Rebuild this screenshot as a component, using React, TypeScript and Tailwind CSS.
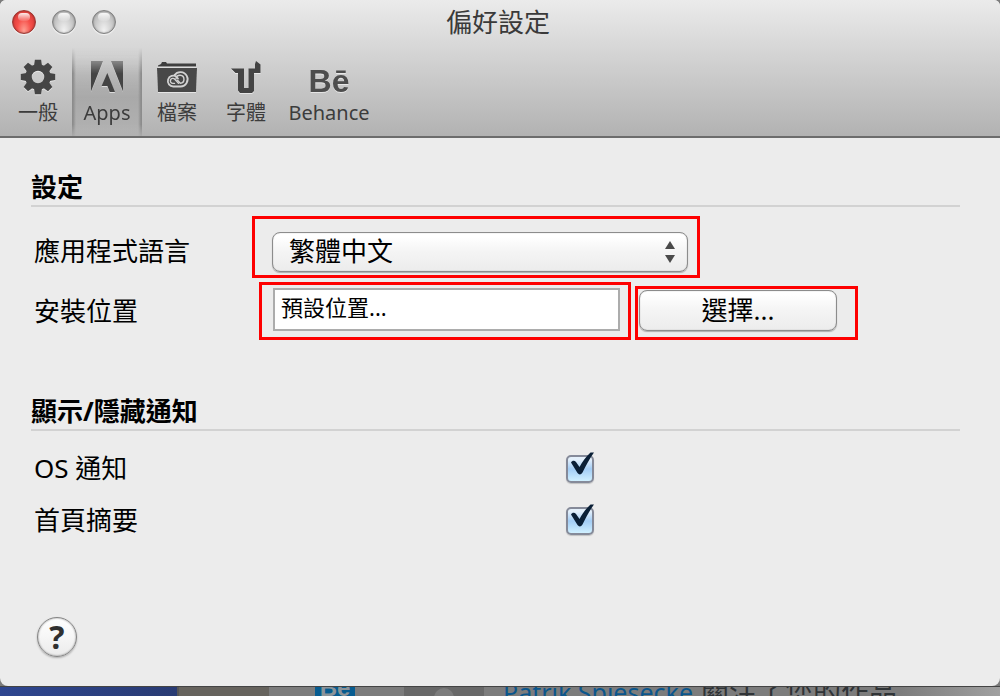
import { useState } from "react";
import type { ReactNode } from "react";

type TabKey = "general" | "apps" | "files" | "fonts" | "behance";

function GearIcon() {
  const teeth = [0, 45, 90, 135, 180, 225, 270, 315];
  return (
    <svg width="36" height="36" viewBox="0 0 36 36" aria-hidden="true">
      {teeth.map((angle) => (
        <path
          key={angle}
          d="M13.8 8 L14.900 0.800 H21.100 L22.200 8 Z"
          fill="#454545"
          transform={`rotate(${angle} 18 18)`}
        />
      ))}
      <circle cx="18" cy="18" r="9.500" fill="none" stroke="#454545" strokeWidth="6.500" />
    </svg>
  );
}

function AdobeIcon() {
  return (
    <svg width="34" height="32" viewBox="0 0 34 32" fill="#444" aria-hidden="true">
      <path d="M1 0 H13 L1 30.500 Z" />
      <path d="M21 0 H33 V30.500 Z" />
      <path d="M17.300 12 L25 31 H19.700 L17.400 25 H11.600 Z" />
    </svg>
  );
}

function FolderIcon() {
  return (
    <svg width="42" height="32" viewBox="0 0 42 32" aria-hidden="true">
      <path d="M2 4.500 L5 3 L6 1 H10 L11 2.500 H40 V5.500 H2 Z" fill="#3e3e3e" />
      <path d="M1 7 H41 L40 31 H2 Z" fill="#484848" />
      <g fill="none" stroke="#d2d2d2" strokeLinecap="round">
        <path d="M18.500 14.200 A7.200 7.200 0 1 1 24.500 25.500 H17.500 A5.400 5.400 0 1 1 20.500 15.800 L22 17.500" strokeWidth="1.800" />
        <path d="M22.500 22.300 L18.800 18.300 A2.500 2.500 0 1 0 17 22.400 H18.500" strokeWidth="1.400" />
        <path d="M20 17.800 A4 4 0 1 1 24.300 22.300 L21.500 19.300" strokeWidth="1.400" />
      </g>
    </svg>
  );
}

function TypekitIcon() {
  return (
    <svg width="32" height="34" viewBox="0 0 32 34" fill="#444" aria-hidden="true">
      <path d="M1 8.500 H14 V28 H18.500 V8.500 H25 V4 L26 1 L30.500 4.500 V13 H24 V31 L22 33 H10 L8 30.500 V13 H5.500 Z" />
    </svg>
  );
}

function BehanceIcon() {
  return (
    <span
      className="pt-2 font-['Liberation_Sans',sans-serif] text-[32px] leading-8 font-bold text-[#4d4d4d]"
      aria-hidden="true"
    >
      Bē
    </span>
  );
}

const tabs: { key: TabKey; label: string; icon: ReactNode; width: string }[] = [
  { key: "general", label: "一般", icon: <GearIcon />, width: "w-[68px]" },
  { key: "apps", label: "Apps", icon: <AdobeIcon />, width: "w-[70px]" },
  { key: "files", label: "檔案", icon: <FolderIcon />, width: "w-[70px]" },
  { key: "fonts", label: "字體", icon: <TypekitIcon />, width: "w-[68px]" },
  { key: "behance", label: "Behance", icon: <BehanceIcon />, width: "w-[98px]" }
];

const lights = [
  {
    label: "關閉",
    tone: "border-[#9c3631] bg-[radial-gradient(ellipse_at_50%_90%,#ffa093_0%,#f6504a_45%,#cf3432_100%)]"
  },
  {
    label: "縮到最小",
    tone: "border-[#808080] bg-[radial-gradient(ellipse_at_50%_90%,#f2f2f2_0%,#cfcfcf_50%,#a6a6a6_100%)]"
  },
  {
    label: "縮放",
    tone: "border-[#808080] bg-[radial-gradient(ellipse_at_50%_90%,#f2f2f2_0%,#cfcfcf_50%,#a6a6a6_100%)]"
  }
];

function TrafficLight({ label, tone }: { label: string; tone: string }) {
  return (
    <button
      type="button"
      aria-label={label}
      className={`flex size-6 justify-center rounded-full border pt-0.5 shadow-[inset_0_0_2px_#0006,0_1px_1px_#ffffffb0] ${tone}`}
    >
      <span className="h-2 w-3 rounded-full bg-linear-to-b from-white/90 to-white/10" />
    </button>
  );
}

function SectionTitle({ children }: { children: ReactNode }) {
  return (
    <h2 className="border-b-2 border-[#d2d2d2] text-[26px] leading-9 font-bold">
      {children}
    </h2>
  );
}

function CheckRow({ id, label }: { id: string; label: string }) {
  const [checked, setChecked] = useState(true);
  return (
    <div className="flex h-[52px] items-center pl-[3px]">
      <label htmlFor={id} className="w-[532px]">
        {label}
      </label>
      <span className="relative flex pt-0.5">
        <input
          id={id}
          type="checkbox"
          checked={checked}
          onChange={() => setChecked(!checked)}
          className="size-7 appearance-none rounded-[5px] border-2 border-[#858a99] bg-linear-to-b from-[#e4f0fb] from-10% via-[#a3cdf5] via-50% to-[#d0f0ff] shadow-[0_1px_1px_#00000030]"
        />
        {checked ? (
          <svg
            className="pointer-events-none absolute -top-1 left-0"
            width="32"
            height="32"
            viewBox="0 0 32 32"
            aria-hidden="true"
          >
            <path
              d="M5 13.500 C6 11.500 8.500 11 10 13 L13.500 18 C16.500 12.500 20 7.500 24.500 3.500 H28 C23.500 9.500 20 16.500 16.500 23.500 C15 26 13 26 11.500 24 Z"
              fill="#0a1f36"
            />
          </svg>
        ) : null}
      </span>
    </div>
  );
}

export default function App() {
  const [tab, setTab] = useState<TabKey>("apps");
  const [location, setLocation] = useState("預設位置...");

  return (
    <div className="flex min-h-screen flex-col bg-[#7c7c7c] font-['Noto_Sans','Noto_Sans_CJK_TC',sans-serif] text-[26px] leading-9 text-black">
      <div className="flex grow flex-col overflow-hidden rounded-t-md rounded-b-lg bg-[#ececec]">
        <header className="border-b-2 border-[#6c6c6c] bg-linear-to-b from-[#ebebeb] to-[#b2b2b2]">
          <div className="grid grid-cols-[1fr_auto_1fr] items-center pt-1 pr-4 pl-3">
            <div className="flex gap-4">
              {lights.map((light) => (
                <TrafficLight key={light.label} {...light} />
              ))}
            </div>
            <h1 className="text-[#3a3a3a]">偏好設定</h1>
          </div>
          <nav className="flex pl-1">
            {tabs.map((item) => (
              <button
                key={item.key}
                type="button"
                aria-pressed={tab === item.key}
                onClick={() => setTab(item.key)}
                className={`flex h-24 flex-col items-center justify-end pb-[9px] text-xl leading-7 text-[#3c3c3c] ${item.width} ${
                  tab === item.key
                    ? "bg-[linear-gradient(to_right,#8c8c8c_0_1px,transparent_4px,transparent_calc(100%-4px),#8c8c8c_calc(100%-1px)),linear-gradient(to_bottom,transparent_5%,#a9a9a9_60%,#b2b2b2)] [mask-image:linear-gradient(to_bottom,transparent_8%,black_35%,black_88%,#0003)]"
                    : ""
                }`}
              >
                <span className="flex h-11 items-center drop-shadow-[0_1px_0_#ffffff90]">
                  {item.icon}
                </span>
                {item.label}
              </button>
            ))}
          </nav>
        </header>

        <main className="flex grow flex-col pt-[31px] pr-10 pb-[29px] pl-[31px]">
          <SectionTitle>設定</SectionTitle>
          <div className="mt-[9px] flex flex-col gap-1 pl-[3px]">
            <div className="flex items-center">
              <label htmlFor="language" className="w-[218px] shrink-0 pt-2">
                應用程式語言
              </label>
              <div className="border-3 border-[#fe0000] pt-[13px] pr-[9px] pb-[3px] pl-[17px]">
                <div className="relative">
                  <select
                    id="language"
                    className="block h-10 w-[416px] appearance-none rounded-lg border border-[#8c8c8c] bg-linear-to-b from-white from-10% via-[#f4f4f4] via-50% to-[#ececec] pb-0.5 pl-4 shadow-[inset_0_0_1px_#0006,0_1px_1px_#0004]"
                  >
                    <option>繁體中文</option>
                  </select>
                  <svg
                    className="pointer-events-none absolute top-[9px] right-3"
                    width="12"
                    height="22"
                    viewBox="0 0 12 22"
                    fill="#4a4a4a"
                    aria-hidden="true"
                  >
                    <path d="M6 0 L11 8 H1 Z M1 14 H11 L6 22 Z" />
                  </svg>
                </div>
              </div>
            </div>

            <div className="flex items-center">
              <label htmlFor="location" className="w-[225px] shrink-0">
                安裝位置
              </label>
              <div className="flex items-start gap-1">
                <div className="border-3 border-[#fe0000] pt-[3px] pr-2 pb-1.5 pl-[11px]">
                  <input
                    id="location"
                    type="text"
                    value={location}
                    onChange={(e) => setLocation(e.target.value)}
                    className="block h-[43px] w-[347px] border-2 border-[#acacac] bg-white px-1.5 pb-2 text-[22px] leading-8 outline-none"
                  />
                </div>
                <div className="mt-1 border-3 border-[#fe0000] pt-px pr-[18px] pb-1.5 pl-px">
                  <button
                    type="button"
                    className="block h-[41px] w-[198px] rounded-lg border border-[#8c8c8c] bg-linear-to-b from-white from-10% via-[#f4f4f4] via-50% to-[#ececec] pb-0.5 shadow-[inset_0_0_1px_#0006,0_1px_1px_#0004]"
                  >
                    選擇...
                  </button>
                </div>
              </div>
            </div>
          </div>

          <div className="mt-[53px]">
            <SectionTitle>顯示/隱藏通知</SectionTitle>
            <div className="mt-[11px]">
              <CheckRow id="os-notice" label="OS 通知" />
              <CheckRow id="home-digest" label="首頁摘要" />
            </div>
          </div>

          <button
            type="button"
            aria-label="說明"
            className="mt-auto ml-1.5 size-10 rounded-full border border-[#858585] bg-linear-to-b from-white via-[#f6f6f6] to-[#ebebeb] font-['Open_Sans',sans-serif] text-[32px] font-bold text-[#303030] shadow-[inset_0_0_2px_#0007,0_1px_2px_#0004]"
          >
            ?
          </button>
        </main>
      </div>

      <footer className="flex h-2.5 overflow-hidden border-t border-[#444] bg-linear-to-r from-[#7c7c7c] from-90% to-[#a0a0a0] text-[#303437]">
        <div className="w-[177px] shrink-0 bg-linear-to-r from-[#2e4690] to-[#293b73]" />
        <div className="w-[92px] shrink-0 border-l-2 border-[#555] bg-[#66635d]" />
        <div className="ml-[46px] flex w-10 shrink-0 items-end justify-center bg-[#075c90] font-['Liberation_Sans',sans-serif] text-2xl leading-4 font-bold text-[#8c9499]">
          Be
        </div>
        <div className="ml-[49px] flex w-20 shrink-0 justify-center bg-[#686868]">
          <span className="mt-px size-5 rounded-full bg-[#7c7c7c]" />
        </div>
        <p className="ml-[19px] flex items-center gap-2 whitespace-nowrap">
          <a href="#patrik" className="text-[25px] text-[#0b568c]">
            Patrik Spiesecke
          </a>
          <span className="text-[28px]">關注了您的作品</span>
        </p>
      </footer>
    </div>
  );
}
